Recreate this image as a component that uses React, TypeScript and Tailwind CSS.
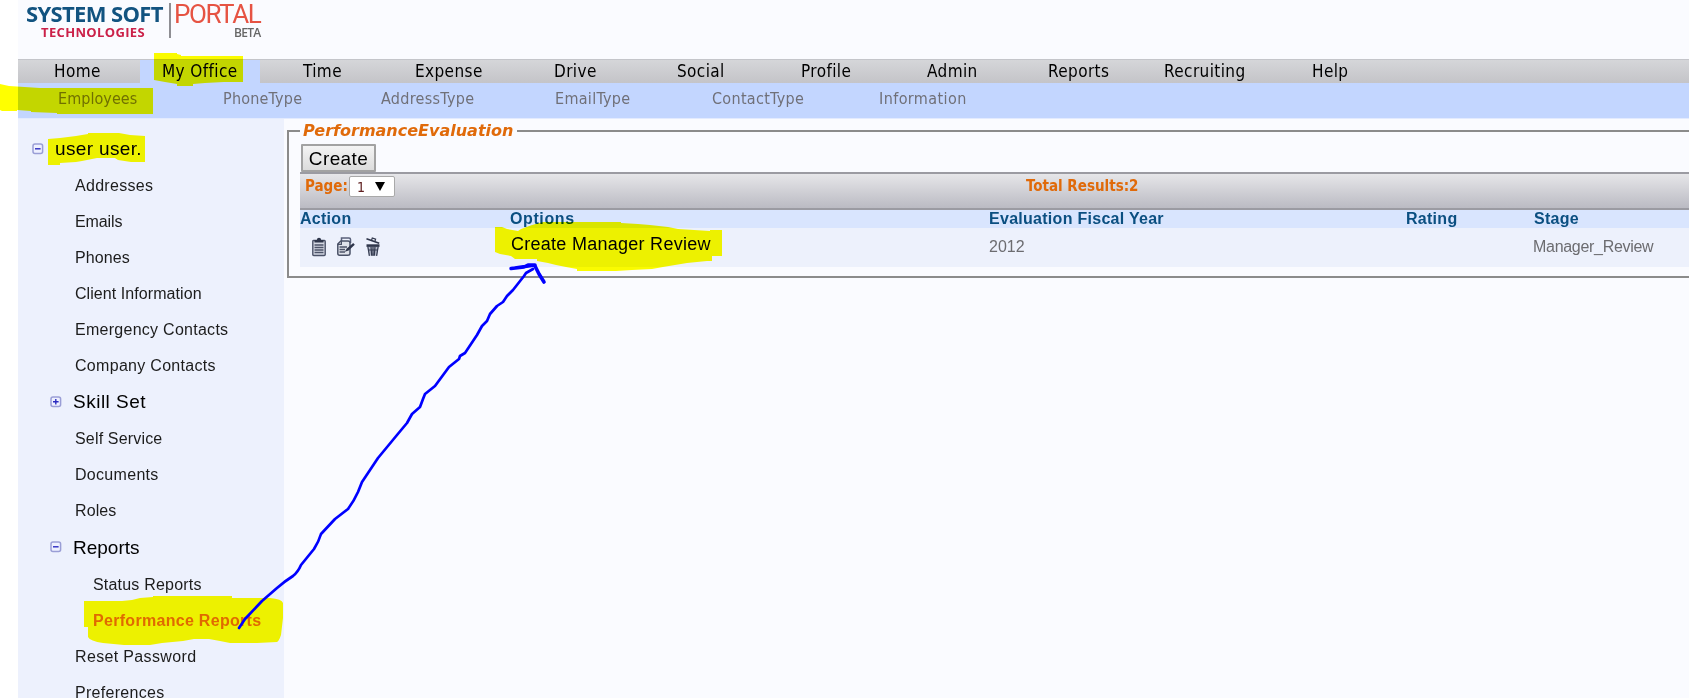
import React from "react";

const tahoma = "font-['DejaVu_Sans_Condensed','DejaVu_Sans',sans-serif] [font-stretch:condensed]";
const arial = "font-['Liberation_Sans',Arial,sans-serif]";

const tabs = [
  { label: "Home", box: "w-[122px] pl-[36px]" },
  { label: "My Office", box: "w-[120px] pl-[22px] bg-[#c3d6ff]" },
  { label: "Time", box: "w-[155px] pl-[43px]" },
  { label: "Expense", box: "w-[139px]" },
  { label: "Drive", box: "w-[123px]" },
  { label: "Social", box: "w-[124px]" },
  { label: "Profile", box: "w-[126px]" },
  { label: "Admin", box: "w-[121px]" },
  { label: "Reports", box: "w-[116px]" },
  { label: "Recruiting", box: "w-[148px]" },
  { label: "Help", box: "w-[100px]" },
];

const subTabs = [
  { label: "Employees", box: "w-[165px] tracking-[0.05px]" },
  { label: "PhoneType", box: "w-[158px] tracking-[0.2px]" },
  { label: "AddressType", box: "w-[174px] tracking-[0.3px]" },
  { label: "EmailType", box: "w-[157px] tracking-[0.3px]" },
  { label: "ContactType", box: "w-[167px] tracking-[0.3px]" },
  { label: "Information", box: "w-[120px] tracking-[0.4px]" },
];

function Toggle({ open }: { open: boolean }) {
  return (
    <svg width="12" height="12" viewBox="0 0 12 12" className="-mt-[2px] shrink-0">
      <rect x="1" y="1" width="9.6" height="9.6" rx="2" fill="#eef0ff" stroke="#9a9ed6" strokeWidth="1.5" />
      <path d={open ? "M3 5.8H8.6" : "M3 5.8H8.6M5.8 3V8.6"} stroke="#2a2ac0" strokeWidth="1.4" />
    </svg>
  );
}

function Item({ label, className }: { label: string; className: string }) {
  return (
    <li className={`h-9 text-base leading-9 whitespace-nowrap text-[#1c1c1c] ${className}`}>
      {label}
    </li>
  );
}

function Group({ label, open, className }: { label: string; open: boolean; className: string }) {
  return (
    <li className={`flex items-center whitespace-nowrap text-black ${className}`}>
      <Toggle open={open} />
      <span>{label}</span>
    </li>
  );
}

function ClipboardIcon() {
  return (
    <svg width="14" height="20" viewBox="0 0 14 20">
      <path d="M1.5 3.5H12.5Q13.2 3.5 13.2 4.5V17.5Q13.2 18.5 12.2 18.5H1.8Q.8 18.5 .8 17.5V4.5Q.8 3.5 1.5 3.5Z" fill="#d5d9e4" stroke="#4a5167" strokeWidth="1.4" />
      <path d="M2.5 5.5V3H4.8Q5 .8 7 .8T9.2 3H11.5V5.5Z" fill="#2f364b" />
      <path d="M2.5 8H11.5M2.5 10.5H11.5M2.5 13H11.5M2.5 15.5H11.5" stroke="#4c5368" strokeWidth="1.4" />
    </svg>
  );
}

function EditIcon() {
  return (
    <svg width="18" height="20" viewBox="0 0 18 20">
      <path d="M4.5 4V1H12Q13.5 1 13.5 2.5V6" fill="none" stroke="#59607a" strokeWidth="1.5" />
      <path d="M3.8 4H11Q13 4 13 6V16.5Q13 18.3 11 18.3H2.5Q.8 18.3 .8 16.5V7Z" fill="#dfe2ea" stroke="#4a5167" strokeWidth="1.5" strokeLinejoin="round" />
      <path d="M.8 7.4H4.4V4" fill="none" stroke="#4a5167" strokeWidth="1.2" />
      <path d="M2.5 10H10M2.5 12.5H8M2.5 15H8" stroke="#4c5368" strokeWidth="1.4" />
      <path d="M7.8 14.8L9.8 11.6L16.2 6L17.8 7.8L11.6 13.6Z" fill="#2f364b" />
    </svg>
  );
}

function TrashIcon() {
  return (
    <svg width="14" height="20" viewBox="0 0 14 20">
      <path d="M.5 1.8L13.2 6.2" stroke="#2f364b" strokeWidth="1.7" />
      <path d="M5.6 3L6.3 1L9.6 2.2L9 4.2" fill="none" stroke="#2f364b" strokeWidth="1.2" />
      <path d="M.5 7.3H13.5V9.9H.5Z" fill="#2f364b" />
      <path d="M1.5 9.9H12.5L11.2 18.8H2.8Z" fill="#b9bece" />
      <path d="M1.9 9.9L3.4 18.8M5 9.9L5.7 18.8M7 9.9V18.8M9 9.9L8.3 18.8M12.1 9.9L10.6 18.8M2.2 13H11.8" stroke="#343b50" strokeWidth="1.2" />
    </svg>
  );
}

function Markup() {
  return (
    <>
      <svg width="1689" height="698" className="pointer-events-none absolute top-0 left-0 mix-blend-multiply" fill="#ffff00">
        <path d="M154 53H177V54L181 55V56H243V82H224L205 83L193 84V86H177V84L165 82L154 80Z" />
        <path d="M0 84L9 86L40 88H123V88H153V114H57V113L31 112V111L17 110V111L2 111L0 110Z" />
        <path d="M48 139L60 138L76 136L88 134V133H119L130 135L145 136V162L131 162L118 160L115 158H97L82 161L76 162L60 163V165H48Z" />
        <path d="M84 601H122L132 600L140 598L153 597V596H232V598L270 598Q282 599 283 603V618L281 635Q279 641 277 642L257 643H230L220 641L209 639H194L183 641L162 643L150 645H124L103 643Q90 641 88 637V627H84Z" />
        <path d="M495 227H502L507 229L518 231L521 229L532 225L543 222H621V223L638 224L650 225L668 227L678 229L710 231V230H722V256H712V261H707L687 263L663 267L652 269L632 270L616 271H577V269L566 267L556 265L548 263L537 261V259L515 259L511 256L500 254L495 252Z" />
      </svg>
      <svg width="1689" height="698" className="pointer-events-none absolute top-0 left-0" fill="none" stroke="#0000ff" strokeLinecap="round" strokeLinejoin="round">
        <path strokeWidth="2.7" d="M239 628L245 619L262 601L277 588Q285 581 293 576Q298 572 301 565L314 549Q319 541 321 534L335 519L348 509Q354 501 358 492L362 482L378 458L397 435L407 423L412 414L420 407L423 399L425 394L435 386L449 367L459 359L460 356L465 353L477 335L482 326L487 321L490 314L497 306L503 302L507 296L513 290L524 276L526 273L533 269" />
        <path strokeWidth="3.4" d="M511 268.5L524 267L528 265H535L515 268" />
        <path strokeWidth="3.6" d="M535 266L539 274L544 282" />
      </svg>
    </>
  );
}

export default function App() {
  return (
    <div className={`relative h-[698px] w-[1689px] overflow-hidden bg-white pl-[18px] ${arial}`}>
      <div className="flex h-full flex-col bg-[#fafbff]">
        <header className="flex h-[59px] shrink-0 pl-2 whitespace-nowrap">
          <div className="w-[143px]">
            <div className="font-['Open_Sans',sans-serif] text-[22px] leading-[26px] font-bold tracking-[-0.65px] text-[#125380]">SYSTEM SOFT</div>
            <div className="pl-[15px] font-['Open_Sans',sans-serif] text-[13px] leading-[13px] font-bold tracking-[0.35px] text-[#cb2149]">TECHNOLOGIES</div>
          </div>
          <div className="mt-[3px] h-[35px] w-[2px] bg-[#8e8e93]" />
          <div className="w-[90px] pl-[3px]">
            <div className="font-['Roboto',sans-serif] text-[26px] leading-[29px] tracking-[-1.4px] text-[#e65343]">PORTAL</div>
            <div className="pl-[60px] font-['Open_Sans',sans-serif] text-xs leading-[8px] font-semibold tracking-[-0.7px] text-[#666]">BETA</div>
          </div>
        </header>

        <nav className={`flex h-6 shrink-0 border-t border-[#c4c5ca] bg-linear-to-b from-[#d5d6d9] to-[#c4c4c8] text-[17px] leading-[23px] tracking-[0.4px] whitespace-nowrap text-black ${tahoma}`}>
          {tabs.map((t) => (
            <div key={t.label} className={`shrink-0 ${t.box}`}>{t.label}</div>
          ))}
        </nav>
        <nav className={`flex h-9 shrink-0 border-b border-[#e3ebff] bg-[#c3d6ff] pl-[40px] text-base leading-[31px] whitespace-nowrap text-[#707078] ${tahoma}`}>
          {subTabs.map((t) => (
            <div key={t.label} className={`shrink-0 ${t.box}`}>{t.label}</div>
          ))}
        </nav>

        <div className="flex min-h-0 flex-1">
          <aside className="w-[266px] shrink-0 overflow-hidden bg-[#edf1fd] pt-3">
            <ul>
              <Group label="user user." open className="h-[37px] gap-[11px] pl-[14px] text-[19px] tracking-[0.35px]" />
              <Item label="Addresses" className="pl-[57px] tracking-[0.3px]" />
              <Item label="Emails" className="pl-[57px] tracking-[-0.1px]" />
              <Item label="Phones" className="pl-[57px] tracking-[0.1px]" />
              <Item label="Client Information" className="pl-[57px] tracking-[0.07px]" />
              <Item label="Emergency Contacts" className="pl-[57px] tracking-[0.27px]" />
              <Item label="Company Contacts" className="pl-[57px] tracking-[0.3px]" />
              <Group label="Skill Set" open={false} className="h-[37px] gap-[11px] pl-8 text-[19px] tracking-[0.5px]" />
              <Item label="Self Service" className="pl-[57px] tracking-[0.17px]" />
              <Item label="Documents" className="pl-[57px] tracking-[0.3px]" />
              <Item label="Roles" className="pl-[57px] tracking-[0.1px]" />
              <Group label="Reports" open className="h-[38px] gap-[11px] pl-8 text-[19px]" />
              <Item label="Status Reports" className="pl-[75px] tracking-[0.2px]" />
              <Item label="Performance Reports" className="pl-[75px] font-bold !text-[#e06a0a] tracking-[0.3px]" />
              <Item label="Reset Password" className="pl-[57px] tracking-[0.35px]" />
              <Item label="Preferences" className="pl-[57px] tracking-[0.3px]" />
            </ul>
          </aside>

          <main className="min-w-0 flex-1 pt-[2px] pl-[3px]">
            <fieldset className="h-[157px] w-[1420px] border-2 border-[#8b8b8b] pl-[11px]">
              <legend className="h-5 pr-1 pl-[3px] font-['DejaVu_Sans',sans-serif] text-base leading-5 font-bold whitespace-nowrap text-[#e06a0a] italic">PerformanceEvaluation</legend>
              <div className="mt-[3px] h-[28px] pl-px">
                <button className="h-7 w-[75px] rounded-[1px] border-2 border-[#a2a2a2] bg-linear-to-b from-[#f4f4f4] to-[#dcdcdc] text-[19px] leading-[25px] tracking-[0.4px] text-black">Create</button>
              </div>
              <div className={`flex h-[38px] border-t-2 border-b-2 border-[#9b9ba2] bg-linear-to-b from-[#e6e6e9] to-[#bbbbc3] pl-[5px] text-[15px] font-bold whitespace-nowrap text-[#e06a0a] ${tahoma}`}>
                <div className="flex w-[721px] pt-px leading-[22px]">
                  <span className="w-[44px]">Page:</span>
                  <span className="mt-px flex h-[21px] w-[46px] items-center rounded-[2px] border border-[#a9a9a9] bg-white pl-[7px] text-[14px] leading-4 font-normal text-[#602020]">
                    1
                    <svg width="10" height="9" viewBox="0 0 10 9" className="ml-[10px]"><path d="M0 0H10L5 9Z" fill="#000" /></svg>
                  </span>
                </div>
                <div className="leading-[25px]">Total Results:2</div>
              </div>
              <div className="flex h-[18px] bg-[#d9e5fe] text-base leading-[18px] font-bold tracking-[0.28px] whitespace-nowrap text-[#0b4f81]">
                <div className="w-[210px]">Action</div>
                <div className="w-[479px] tracking-[0.6px]">Options</div>
                <div className="w-[417px]">Evaluation Fiscal Year</div>
                <div className="w-[128px]">Rating</div>
                <div>Stage</div>
              </div>
              <div className="flex h-[39px] bg-[#edf1fc] text-base leading-[38px] whitespace-nowrap text-[#6c6c70]">
                <div className="flex w-[211px] gap-[11px] pt-[9px] pl-3"><ClipboardIcon /><EditIcon /><TrashIcon /></div>
                <div className="w-[478px] text-[18px] leading-[33px] tracking-[0.27px] text-black">Create Manager Review</div>
                <div className="w-[544px]">2012</div>
                <div className="tracking-[-0.3px]">Manager_Review</div>
              </div>
            </fieldset>
          </main>
        </div>
      </div>
      <Markup />
    </div>
  );
}
